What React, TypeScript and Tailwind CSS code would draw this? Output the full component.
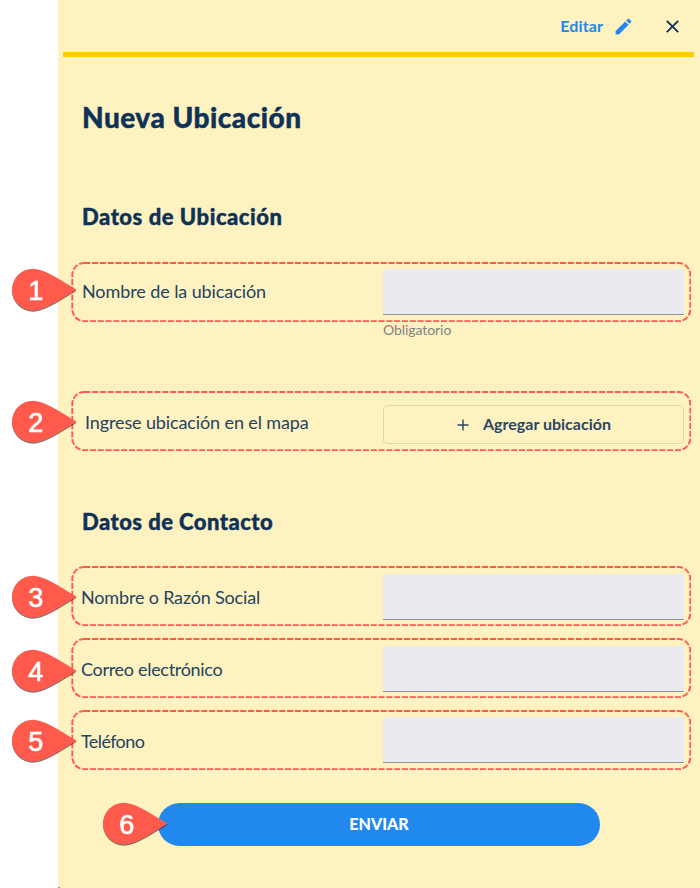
import React from "react";

function Pin({ n, className }: { n: number; className: string }) {
  return (
    <svg
      className={`absolute z-10 overflow-visible ${className}`}
      width="66"
      height="44"
      viewBox="0.5 0 66 44"
      style={{ filter: "drop-shadow(0.5px 1px 0.6px rgba(0,0,0,0.55))" }}
    >
      <path
        d="M21.5 0.7C31 0.7 45 9.2 65 21.7C45 34.2 31 42.7 21.5 42.7A21 21 0 0 1 21.5 0.7Z"
        fill="#ff5a4b"
      />
      <text
        x="24.2"
        y="31.6"
        textAnchor="middle"
        fontSize="27"
        fill="#fff"
        stroke="#fff"
        strokeWidth="0.7"
        fontFamily="'Liberation Sans', sans-serif"
      >
        {n}
      </text>
    </svg>
  );
}

function Outline() {
  return (
    <svg className="pointer-events-none absolute inset-0" width="620" height="60" fill="none">
      <rect
        x="1.3"
        y="1"
        width="618"
        height="58.2"
        rx="12"
        stroke="#ff5a4f"
        strokeWidth="1.9"
        strokeDasharray="6 1.8"
      />
    </svg>
  );
}

type RowProps = {
  n: number;
  label: string;
  labelClass: string;
  pinClass: string;
  className: string;
  children: React.ReactNode;
};

function Row({ n, label, labelClass, pinClass, className, children }: RowProps) {
  return (
    <div className={`relative ml-[13px] flex h-[60px] w-[620px] shrink-0 ${className}`}>
      <Outline />
      <Pin n={n} className={pinClass} />
      <label className={`w-[312px] shrink-0 whitespace-nowrap text-[18px] text-[#24435f] ${labelClass}`}>
        {label}
      </label>
      {children}
    </div>
  );
}

function Field({ className }: { className: string }) {
  return <input className={`h-[46px] w-[301px] border-b border-[#8d919b] bg-[#eaebef] outline-none ${className}`} />;
}

export default function App() {
  return (
    <div className="flex h-[888px] w-[700px] overflow-hidden bg-white pl-[58px] font-['Lato',sans-serif]">
      <main className="flex w-[642px] flex-col bg-[#fff2c1] text-[#0d3157]">
        <header className="flex h-[52px] shrink-0 items-center justify-end pr-[21px]">
          <button className="flex items-center text-[16px] font-bold text-[#2188ee]">
            <span className="-mt-px tracking-[0.1px]">Editar</span>
            <svg className="ml-[10px]" width="21" height="21" viewBox="0 0 24 24" fill="currentColor">
              <path d="M3 17.25V21h3.75L17.81 9.94l-3.75-3.75L3 17.25zM20.71 7.04a1 1 0 0 0 0-1.41l-2.34-2.34a1 1 0 0 0-1.41 0l-1.83 1.83 3.75 3.75 1.83-1.83z" />
            </svg>
          </button>
          <svg className="ml-[32px]" width="13" height="13" viewBox="0 0 13 13" stroke="#0d3157" strokeWidth="1.8">
            <path d="M0.8 0.8L12.2 12.2M12.2 0.8L0.8 12.2" />
          </svg>
        </header>
        <div className="ml-[5px] h-[5px] w-[631px] shrink-0 bg-[#ffcb05]" />

        <h1 className="ml-[24px] mt-[42px] h-[36px] whitespace-nowrap text-[28px] font-black leading-[36px] tracking-[0.5px] [-webkit-text-stroke:0.4px_#0d3157]">
          Nueva Ubicación
        </h1>
        <h2 className="ml-[24px] mt-[67px] h-[30px] whitespace-nowrap text-[22px] font-black leading-[30px] tracking-[0.53px] [-webkit-text-stroke:0.4px_#0d3157]">
          Datos de Ubicación
        </h2>

        <Row n={1} label="Nombre de la ubicación" labelClass="pl-[11px] leading-[58px] tracking-[-0.09px]" pinClass="left-[-59px] top-[6px]" className="mt-[30px]">
          <Field className="mt-[7px]" />
        </Row>
        <p className="ml-[325px] h-[18px] text-[14px] leading-[16px] tracking-[-0.07px] text-[#7c8583]">Obligatorio</p>

        <Row n={2} label="Ingrese ubicación en el mapa" labelClass="pl-[14px] leading-[62px] tracking-[-0.12px]" pinClass="left-[-59px] top-[9px]" className="mt-[51px]">
          <button className="mt-[14px] flex h-[39px] w-[301px] items-center rounded-[4px] border border-[#e3d7a9] pl-[73px] text-[16px] font-bold text-[#294766]">
            <svg width="12" height="12" viewBox="0 0 12 12" stroke="currentColor" strokeWidth="1.4">
              <path d="M6 0.5V11.5M0.5 6H11.5" />
            </svg>
            <span className="-mt-[2px] ml-[14px] whitespace-nowrap">Agregar ubicación</span>
          </button>
        </Row>

        <h2 className="ml-[24px] mt-[56px] h-[30px] whitespace-nowrap text-[22px] font-black leading-[30px] tracking-[0.45px] [-webkit-text-stroke:0.4px_#0d3157]">
          Datos de Contacto
        </h2>

        <Row n={3} label="Nombre o Razón Social" labelClass="pl-[10px] leading-[62px] tracking-[-0.17px]" pinClass="left-[-59px] top-[9px]" className="mt-[29px]">
          <Field className="mt-[8px]" />
        </Row>
        <Row n={4} label="Correo electrónico" labelClass="pl-[10px] leading-[63px] tracking-[-0.3px]" pinClass="left-[-59px] top-[11px]" className="mt-[12px]">
          <Field className="mt-[8px]" />
        </Row>
        <Row n={5} label="Teléfono" labelClass="pl-[10px] leading-[62px] tracking-[-0.6px]" pinClass="left-[-59px] top-[9px]" className="mt-[12px]">
          <Field className="mt-[7px]" />
        </Row>

        <div className="relative ml-[100px] mt-[33px] h-[43px] w-[442px] shrink-0">
          <button className="h-full w-full rounded-full bg-[#2188ee] pb-[2px] text-[16px] font-black text-white">
            ENVIAR
          </button>
          <Pin n={6} className="left-[-55px] top-[-1px]" />
        </div>
        <div className="mt-auto h-px w-[2px] bg-[#8d919b]" />
      </main>
    </div>
  );
}
